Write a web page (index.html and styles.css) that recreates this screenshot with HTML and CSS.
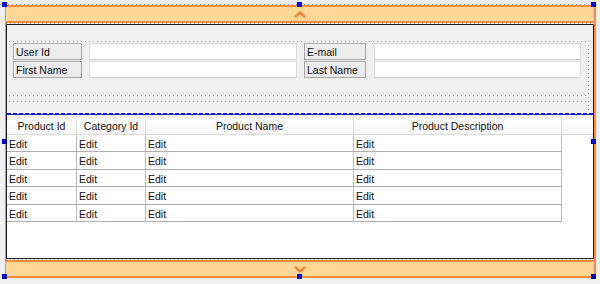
FILE: index.html
```html
<!DOCTYPE html>
<html lang="en">
<head>
    <meta charset="UTF-8">
    <title>Form Designer</title>
    <link rel="stylesheet" href="styles.css">
</head>
<body>
    <div class="ticks ticks-page"></div>
    <div class="frame">
        <div class="band">
            <svg class="chevron" width="12" height="7" viewBox="0 0 12 7"><polyline points="1,6.2 6,1.5 11,6.2"/></svg>
        </div>
        <div class="ticks"></div>

        <div class="panel">
            <div class="form">
                <div class="guide"></div>
                <div class="fields">
                    <span class="label">User Id</span>
                    <span class="textbox"></span>
                    <span class="label">E-mail</span>
                    <span class="textbox"></span>
                    <span class="label">First Name</span>
                    <span class="textbox"></span>
                    <span class="label">Last Name</span>
                    <span class="textbox"></span>
                </div>
                <div class="guide guide-low"></div>
                <div class="guide guide-lower"></div>
                <div class="guide-side"></div>
            </div>

            <div class="split"></div>

            <div class="grid">
                <div class="head">
                    <span>Product Id</span>
                    <span>Category Id</span>
                    <span>Product Name</span>
                    <span>Product Description</span>
                    <span></span>
                </div>
                <div class="row"><span>Edit</span><span>Edit</span><span>Edit</span><span>Edit</span></div>
                <div class="row"><span>Edit</span><span>Edit</span><span>Edit</span><span>Edit</span></div>
                <div class="row"><span>Edit</span><span>Edit</span><span>Edit</span><span>Edit</span></div>
                <div class="row"><span>Edit</span><span>Edit</span><span>Edit</span><span>Edit</span></div>
                <div class="row"><span>Edit</span><span>Edit</span><span>Edit</span><span>Edit</span></div>
            </div>
        </div>

        <div class="ticks"></div>
        <div class="band">
            <svg class="chevron" width="12" height="7" viewBox="0 0 12 7"><polyline points="1,0.8 6,5.5 11,0.8"/></svg>
        </div>
    </div>

    <!-- selection handles -->
    <span class="handle" style="left: 2px; top: 2px;"></span>
    <span class="handle" style="left: 297px; top: 2px;"></span>
    <span class="handle" style="left: 591px; top: 2px;"></span>
    <span class="handle" style="left: 2px; top: 139px;"></span>
    <span class="handle" style="left: 591px; top: 139px;"></span>
    <span class="handle" style="left: 2px; top: 274px;"></span>
    <span class="handle" style="left: 297px; top: 274px;"></span>
    <span class="handle" style="left: 591px; top: 274px;"></span>
</body>
</html>
```

FILE: styles.css
```css
:root {
    --orange: #ff8a3d;
    --band: #ffd898;
    --dots: #a8a8a8;
    --line: #b0b0b0;
}

* {
    box-sizing: border-box;
    margin: 0;
    padding: 0;
}

body {
    position: relative;
    width: 600px;
    height: 284px;
    overflow: hidden;
    background-color: #f0f0f0;
    font-family: 'Liberation Sans', Arial, sans-serif;
    font-size: 10.5px;
    color: #111;
}

.ticks {
    height: 1px;
    background: repeating-linear-gradient(90deg, var(--dots) 0 1px, transparent 1px 4px);
}

.ticks-page {
    position: absolute;
    top: 4px;
    left: 0;
    width: 600px;
}

.frame {
    margin: 5px 0 0 5px;
    width: 591px;
    border-left: 1px solid var(--orange);
    border-right: 2px solid var(--orange);
}

.band {
    height: 18px;
    background-color: var(--band);
    border-top: 2px solid var(--orange);
    border-bottom: 2px solid var(--orange);
    display: flex;
    justify-content: center;
    align-items: center;
}

.chevron polyline {
    fill: none;
    stroke: #ff7a2c;
    stroke-width: 2.4;
}

.panel {
    height: 235px;
    border: 1px solid #1e1e1e;
    background: white;
}

.form {
    position: relative;
    height: 87px;
    background-color: #f0f0f0;
    padding-top: 16px;
}

.guide {
    height: 1px;
    margin: 0 4px 0 2px;
    background: repeating-linear-gradient(90deg, var(--dots) 0 1px, transparent 1px 4px);
}

.guide-low {
    margin-top: 17px;
}

.guide-lower {
    margin-top: 5px;
}

.guide-side {
    position: absolute;
    top: 16px;
    right: 4px;
    width: 1px;
    height: 70px;
    background: repeating-linear-gradient(180deg, var(--dots) 0 1px, transparent 1px 4px);
}

.fields {
    display: grid;
    grid-template-columns: 69px 208px 62px 208px;
    grid-auto-rows: 17px;
    column-gap: 7px;
    row-gap: 1px;
    margin-top: 1px;
    padding-left: 6px;
}

.fields .textbox:nth-child(4),
.fields .textbox:nth-child(8) {
    margin-left: 1px;
}

.label {
    display: flex;
    align-items: center;
    padding: 1px 0 0 2px;
    background-color: #ececec;
    border: 1px solid #a4a4a4;
    box-shadow: inset 1px 1px #fafafa;
    white-space: nowrap;
}

.textbox {
    background: white;
    border: 1px solid #dcdcdc;
    border-bottom-color: #cfcfcf;
}

.split {
    height: 2px;
    margin-top: 1px;
    background-image:
        linear-gradient(90deg, #0a14ff 4px, #ffffff 4px),
        linear-gradient(90deg, #0a14ff 4px, #303060 4px);
    background-size: 6px 1px, 6px 1px;
    background-position: 0 0, 0 1px;
    background-repeat: repeat-x;
}

.head {
    display: grid;
    grid-template-columns: 70px 69px 208px 208px 1fr;
    height: 20px;
    background: linear-gradient(#ffffff, #f8f8f8);
    border-bottom: 1px solid #dedede;
}

.head span {
    display: flex;
    align-items: center;
    justify-content: center;
    padding-top: 2px;
    border-right: 1px solid #e2e2e2;
}

.head span:last-child {
    border-right: none;
}

.row {
    display: grid;
    grid-template-columns: 70px 69px 208px 208px;
    width: 555px;
    height: 17.4px;
    border-bottom: 1px solid var(--line);
}

.row span {
    padding: 2px 0 0 2px;
    border-right: 1px solid #bdbdbd;
    line-height: 14px;
}

.handle {
    position: absolute;
    width: 5px;
    height: 5px;
    background-color: #0000ff;
    border: 1px solid #0000b0;
}
```
